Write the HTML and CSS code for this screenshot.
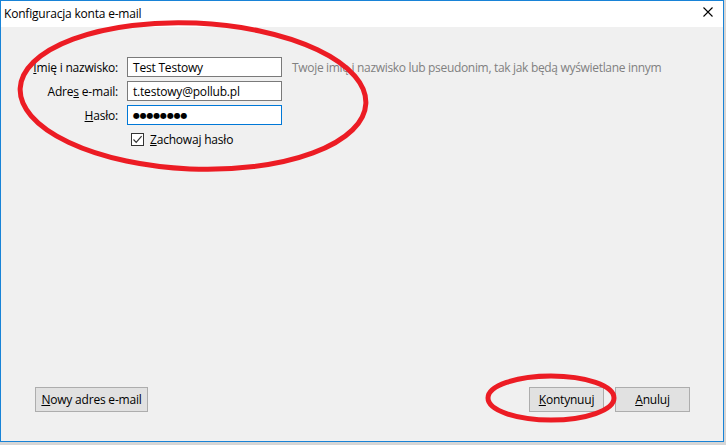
FILE: index.html
```html
<!DOCTYPE html>
<html lang="pl">
<head>
<meta charset="utf-8">
<title>Konfiguracja konta e-mail</title>
<link rel="stylesheet" href="styles.css">
</head>
<body>
<div class="window">
  <div class="titlebar">
    <span class="title">Konfiguracja konta e-mail</span>
    <span class="close">
      <svg width="10" height="10" viewBox="0 0 10 10"><path d="M0.5 0.5 L9.5 9.5 M9.5 0.5 L0.5 9.5" stroke="#000" stroke-width="1.1" fill="none"/></svg>
    </span>
  </div>
  <div class="content">
    <div class="form">
      <label class="lbl"><u>I</u>mię i nazwisko:</label>
      <div class="field">Test Testowy</div>
      <div class="hint">Twoje imię i nazwisko lub pseudonim, tak jak będą wyświetlane innym</div>

      <label class="lbl">Adre<u>s</u> e-mail:</label>
      <div class="field">t.testowy@pollub.pl</div>
      <div></div>

      <label class="lbl"><u>H</u>asło:</label>
      <div class="field focused"><span class="dots">●●●●●●●●</span></div>
      <div></div>

      <div></div>
      <div class="check">
        <span class="box"><svg width="11" height="11" viewBox="0 0 11 11"><path d="M1.5 5.5 L4.2 8.3 L9.6 2.2" stroke="#333" stroke-width="1.2" fill="none"/></svg></span>
        <span><u>Z</u>achowaj hasło</span>
      </div>
      <div></div>
    </div>
    <div class="footer">
      <button class="btn wide"><u>N</u>owy adres e-mail</button>
      <div class="right">
        <button class="btn"><u>K</u>ontynuuj</button>
        <button class="btn"><u>A</u>nuluj</button>
      </div>
    </div>
  </div>
  <svg class="marks" width="724" height="442" viewBox="0 0 724 442">
    <ellipse cx="193" cy="96" rx="173" ry="73" transform="rotate(2.5 193 96)" fill="none" stroke="#ec1c24" stroke-width="5"/>
    <ellipse cx="551" cy="398" rx="63" ry="22" fill="none" stroke="#ec1c24" stroke-width="5"/>
  </svg>
</div>
</body>
</html>
```
FILE: styles.css
```css
html, body {
  margin: 0;
  padding: 0;
}
body {
  background: #d6d6d6;
  width: 726px;
  height: 445px;
  overflow: hidden;
  font-family: "Open Sans", "Noto Sans", sans-serif;
  font-size: 12px;
  color: #000;
}
.window {
  position: relative;
  box-sizing: border-box;
  width: 724px;
  height: 442px;
  border: 1px solid #1883d7;
  background: #f0f0f0;
  display: flex;
  flex-direction: column;
}
.titlebar {
  height: 26px;
  background: #fff;
  display: flex;
  align-items: center;
  justify-content: space-between;
  padding-left: 3px;
  padding-right: 10px;
}
.title {
  letter-spacing: -0.2px;
  margin-top: -2px;
}
.close {
  display: flex;
  margin-top: -4px;
}
.content {
  flex: 1;
  display: flex;
  flex-direction: column;
  padding-top: 30px;
}
.form {
  display: grid;
  grid-template-columns: 117px 155px auto;
  column-gap: 9px;
  row-gap: 4px;
  align-items: center;
}
.lbl {
  text-align: right;
  white-space: nowrap;
  letter-spacing: -0.2px;
}
.field {
  box-sizing: border-box;
  height: 20px;
  border: 1px solid #7a7a7a;
  background: #fff;
  padding-left: 5px;
  display: flex;
  align-items: center;
  letter-spacing: -0.2px;
}
.field.focused {
  border-color: #0078d7;
}
.dots {
  font-family: "DejaVu Sans", sans-serif;
  font-size: 8px;
  letter-spacing: -0.2px;
  margin-top: 1px;
}
.hint {
  color: #808080;
  margin-left: 1px;
  white-space: nowrap;
  letter-spacing: -0.32px;
}
.check {
  display: flex;
  align-items: center;
  gap: 6px;
  padding-left: 4px;
  margin-top: 2px;
  letter-spacing: -0.2px;
}
.box {
  box-sizing: border-box;
  width: 13px;
  height: 13px;
  border: 1px solid #333;
  background: #fff;
  display: flex;
  align-items: center;
  justify-content: center;
}
.footer {
  margin-top: auto;
  display: flex;
  justify-content: space-between;
  padding: 0 33px 29px 34px;
}
.right {
  display: flex;
  gap: 11px;
}
.btn {
  box-sizing: border-box;
  height: 25px;
  width: 75px;
  border: 1px solid #adadad;
  background: #e1e1e1;
  font-family: inherit;
  font-size: 12px;
  color: #000;
  padding: 0;
  letter-spacing: -0.2px;
}
.btn.wide {
  width: 113px;
}
.marks {
  position: absolute;
  left: -1px;
  top: -1px;
  pointer-events: none;
}
```
